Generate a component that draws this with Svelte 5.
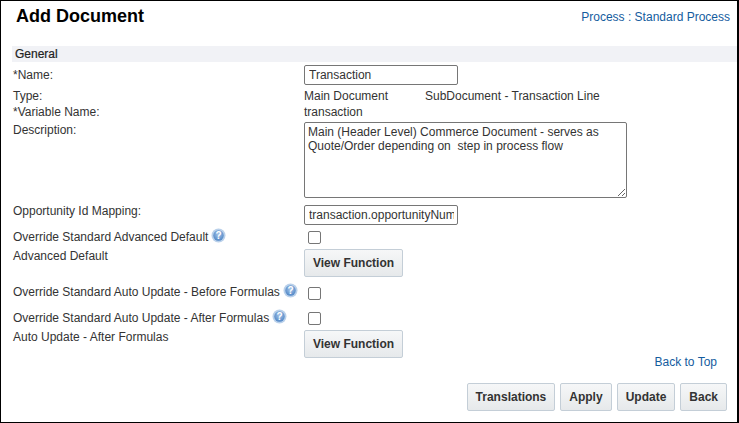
{#snippet helpIcon()}
  <svg class="help" width="15" height="15" viewBox="0 0 15 15" aria-hidden="true">
    <defs>
      <radialGradient id="hg" cx="50%" cy="40%" r="60%">
        <stop offset="0%" stop-color="#a9c6e8" />
        <stop offset="100%" stop-color="#4f86c6" />
      </radialGradient>
    </defs>
    <circle cx="7.5" cy="7.5" r="7" fill="#b9d0ea" />
    <circle cx="7.5" cy="7.5" r="5.2" fill="url(#hg)" />
    <text x="7.5" y="10.8" text-anchor="middle" class="q">?</text>
  </svg>
{/snippet}

<div class="frame">
  <header class="head">
    <h1>Add Document</h1>
    <a href="#p" class="link">Process : Standard Process</a>
  </header>

  <div class="section">General</div>

  <div class="grid">
    <div class="label r-name">*Name:</div>
    <div class="r-name"><input class="text short" value="Transaction" /></div>

    <div class="label r-type">Type:</div>
    <div class="val r-type"><span class="main">Main Document</span><span>SubDocument - Transaction Line</span></div>

    <div class="label r-var">*Variable Name:</div>
    <div class="val r-var">transaction</div>

    <div class="label r-desc">Description:</div>
    <div><textarea class="area">Main (Header Level) Commerce Document - serves as Quote/Order depending on  step in process flow</textarea></div>

    <div class="label up">Opportunity Id Mapping:</div>
    <div><input class="text short" value="transaction.opportunityNumber" /></div>

    <div class="label hl"><span>Override Standard Advanced Default</span>{@render helpIcon()}</div>
    <div><span class="check"></span></div>

    <div class="label">Advanced Default</div>
    <div><button class="btn fn">View Function</button></div>

    <div class="label hl up"><span>Override Standard Auto Update - Before Formulas</span>{@render helpIcon()}</div>
    <div><span class="check"></span></div>

    <div class="label hl"><span>Override Standard Auto Update - After Formulas</span>{@render helpIcon()}</div>
    <div><span class="check"></span></div>

    <div class="label">Auto Update - After Formulas</div>
    <div><button class="btn fn">View Function</button></div>
  </div>

  <div class="top"><a href="#t" class="link">Back to Top</a></div>

  <div class="actions">
    <button class="btn">Translations</button>
    <button class="btn">Apply</button>
    <button class="btn">Update</button>
    <button class="btn">Back</button>
  </div>
</div>

<style>
  :global(body) {
    margin: 0;
    background: #fff;
  }
  .frame {
    box-sizing: border-box;
    width: 739px;
    height: 423px;
    border: 1px solid #000;
    border-width: 1px 2px 1px 1px;
    font-family: "Liberation Sans", Arial, sans-serif;
    font-size: 12px;
    color: #333;
    overflow: hidden;
  }
  .head {
    display: flex;
    justify-content: space-between;
    height: 45px;
    padding: 0 7px 0 15px;
  }
  h1 {
    margin: 5px 0 0;
    font-size: 18px;
    line-height: 21px;
    font-weight: bold;
    color: #000;
  }
  .link {
    color: #145c9e;
    text-decoration: none;
    line-height: 14px;
  }
  .head .link {
    margin-top: 9px;
  }
  .section {
    margin-left: 11px;
    height: 16px;
    line-height: 17px;
    padding-left: 3px;
    background: #f1f2f6;
    color: #222;
    -webkit-text-stroke: 0.2px #222;
  }
  .grid {
    display: grid;
    grid-template-columns: 291px 1fr;
    margin-left: 12px;
    margin-top: 3px;
    grid-template-rows: 20px 17px 20px 83px 25px 19px 37px 25px 19px 30px;
  }
  .label {
    line-height: 14px;
    white-space: nowrap;
    color: #333;
  }
  .hl {
    display: flex;
    align-items: flex-start;
    gap: 3px;
  }
  .up {
    margin-top: -1px;
  }
  .r-name.label { padding-top: 3px; }
  .r-type { padding-top: 4px; line-height: 14px; }
  .r-var { padding-top: 3px; line-height: 14px; }
  .r-desc.label { padding-top: 1px; }
  .val { white-space: nowrap; }
  .main {
    display: inline-block;
    width: 121px;
  }
  .text {
    box-sizing: border-box;
    display: block;
    height: 20px;
    border: 1px solid #767676;
    border-radius: 2px;
    padding: 0 3px 0 4px;
    margin: 0;
    font: 12px "Liberation Sans", Arial, sans-serif;
    color: #333;
    background: #fff;
  }
  .short { width: 154px; }
  .area {
    box-sizing: border-box;
    display: block;
    width: 323px;
    height: 76px;
    margin: 0;
    border: 1px solid #767676;
    border-radius: 2px;
    padding: 2px 3px;
    font: 12px/14px "Liberation Sans", Arial, sans-serif;
    color: #333;
    background: #fff;
  }
  .check {
    display: block;
    box-sizing: border-box;
    width: 13px;
    height: 13px;
    margin: 1px 0 0 4px;
    border: 1px solid #767676;
    border-radius: 2px;
    background: #fff;
  }
  .btn {
    box-sizing: border-box;
    height: 28px;
    padding: 0 8px;
    border: 1px solid #c4ced7;
    border-radius: 2px;
    background: linear-gradient(#f6f7f8, #e6e9eb);
    font: bold 12px "Liberation Sans", Arial, sans-serif;
    color: #333;
    white-space: nowrap;
  }
  .fn { width: 99px; padding: 0; }
  .help {
    margin-top: -2px;
    flex: none;
  }
  .q {
    font: bold 10px "Liberation Sans", Arial, sans-serif;
    fill: #fff;
  }
  .top {
    display: flex;
    justify-content: flex-end;
    padding-right: 20px;
    margin-top: -5px;
    height: 28px;
  }
  .actions {
    display: flex;
    justify-content: flex-end;
    gap: 5px;
    padding-right: 10px;
  }
</style>
